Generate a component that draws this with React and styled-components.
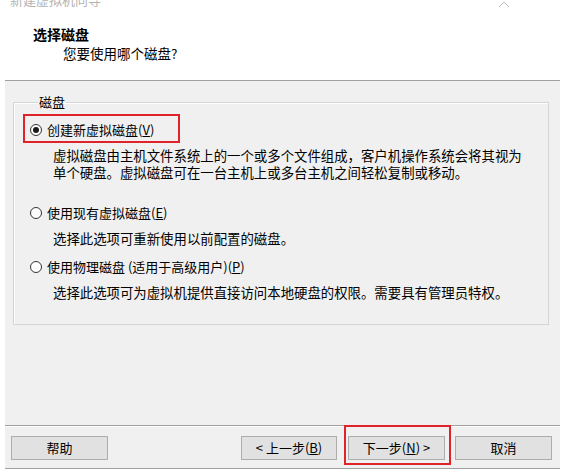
import React from "react";
import styled, { createGlobalStyle } from "styled-components";

const GlobalStyle = createGlobalStyle`
  html, body {
    margin: 0;
    padding: 0;
    background: #ffffff;
  }
  body {
    font-family: "Noto Sans CJK SC", "Noto Sans", sans-serif;
    color: #000;
  }
`;

const Window = styled.div`
  width: 568px;
  height: 474px;
  display: flex;
  flex-direction: column;
  background: #ffffff;
  overflow: hidden;
`;

const TitleBar = styled.div`
  height: 8px;
  overflow: hidden;
  display: flex;
  justify-content: space-between;
  align-items: flex-end;
  padding: 0 58px 0 10px;
  .caption {
    font-size: 13px;
    line-height: 16px;
    color: #b4b4b4;
    margin-top: -9px;
  }
  svg {
    margin-top: -4px;
  }
`;

const Header = styled.div`
  height: 72px;
  padding: 17px 0 0 33px;
  box-sizing: border-box;
  .title {
    font-size: 14px;
    line-height: 18px;
    font-weight: 700;
  }
  .subtitle {
    font-size: 13.5px;
    line-height: 18px;
    margin: 1px 0 0 30px;
  }
`;

const Body = styled.div`
  margin: 0 8px 0 5px;
  height: 389px;
  box-sizing: border-box;
  background: #f0f0f0;
  border-top: 1px solid #a0a0a0;
  border-bottom: 1px solid #a0a0a0;
  display: flex;
  flex-direction: column;
`;

const GroupBox = styled.fieldset`
  margin: 13px 11px 0 8px;
  padding: 0 0 23px 16px;
  border: 1px solid #d5d5d5;
  box-shadow: inset 1px 1px 0 #fff;
  min-width: 0;
  legend {
    margin-left: 8px;
    padding: 0 1px;
    font-size: 13px;
    line-height: 16px;
  }
`;

const Choice = styled.div`
  margin-top: ${(p) => p.$top}px;
`;

const OptionRow = styled.label`
  position: relative;
  display: inline-flex;
  align-items: center;
  gap: 5px;
  height: 20px;
  font-size: 13px;
  line-height: 20px;
  cursor: default;
`;

const Radio = styled.span`
  width: 12px;
  height: 12px;
  box-sizing: border-box;
  border: 1px solid #333;
  border-radius: 50%;
  background: #fff;
  display: flex;
  align-items: center;
  justify-content: center;
  &::after {
    content: "";
    width: 6px;
    height: 6px;
    border-radius: 50%;
    background: ${(p) => (p.$checked ? "#1a1a1a" : "transparent")};
  }
`;

const Desc = styled.div`
  margin: ${(p) => p.$top ?? 7}px 0 0 23px;
  font-size: 13.4px;
  line-height: 17px;
  white-space: nowrap;
`;

const Highlight = styled.span`
  position: absolute;
  left: ${(p) => p.$left}px;
  top: ${(p) => p.$top}px;
  width: ${(p) => p.$w}px;
  height: ${(p) => p.$h}px;
  box-sizing: border-box;
  border: 2px solid #e0232b;
  pointer-events: none;
`;

const Footer = styled.div`
  margin-top: auto;
  border-top: 1px solid #a0a0a0;
  box-shadow: inset 0 1px 0 #fff;
  padding: 10px 8px 8px 6px;
  display: flex;
  align-items: center;
`;

const Spacer = styled.div`
  flex: 1;
`;

const Button = styled.button`
  position: relative;
  width: ${(p) => p.$w || 97}px;
  height: 24px;
  margin-left: ${(p) => p.$gap || 0}px;
  padding: 0;
  background: #e1e1e1;
  border: 1px solid #adadad;
  font-family: "Noto Sans CJK SC", "Noto Sans", sans-serif;
  font-size: 13px;
  line-height: 20px;
  color: #000;
`;

const options = [
  {
    label: "创建新虚拟磁盘",
    key: "V",
    checked: true,
    top: 4,
    desc: [
      "虚拟磁盘由主机文件系统上的一个或多个文件组成，客户机操作系统会将其视为",
      "单个硬盘。虚拟磁盘可在一台主机上或多台主机之间轻松复制或移动。",
    ],
    mark: true,
  },
  {
    label: "使用现有虚拟磁盘",
    key: "E",
    top: 16,
    desc: ["选择此选项可重新使用以前配置的磁盘。"],
  },
  {
    label: "使用物理磁盘 (适用于高级用户)",
    key: "P",
    top: 4,
    desc: ["选择此选项可为虚拟机提供直接访问本地硬盘的权限。需要具有管理员特权。"],
  },
];

const App = () => {
  return (
    <>
      <GlobalStyle />
      <Window>
        <TitleBar>
          <span className="caption">新建虚拟机向导</span>
          <svg width="12" height="8" viewBox="0 0 12 8">
            <polyline points="1,7 6,2 11,7" fill="none" stroke="#b8b8b8" strokeWidth="1" />
          </svg>
        </TitleBar>
        <Header>
          <div className="title">选择磁盘</div>
          <div className="subtitle">您要使用哪个磁盘?</div>
        </Header>
        <Body>
          <GroupBox>
            <legend>磁盘</legend>
            {options.map((o) => (
              <Choice key={o.key} $top={o.top}>
                <OptionRow>
                  <Radio $checked={o.checked} />
                  <span>
                    {o.label}(<u>{o.key}</u>)
                  </span>
                  {o.mark && <Highlight $left={-7} $top={-6} $w={157} $h={29} />}
                </OptionRow>
                {o.desc.map((d, i) => (
                  <Desc key={i} $top={i === 0 ? 7 : 0}>
                    {d}
                  </Desc>
                ))}
              </Choice>
            ))}
          </GroupBox>
          <Footer>
            <Button>帮助</Button>
            <Spacer />
            <Button $w={96}>
              &lt; 上一步(<u>B</u>)
            </Button>
            <Button $gap={11}>
              下一步(<u>N</u>) &gt;
              <Highlight $left={-5} $top={-12} $w={107} $h={40} />
            </Button>
            <Button $gap={10}>取消</Button>
          </Footer>
        </Body>
      </Window>
    </>
  );
};

export default App;
